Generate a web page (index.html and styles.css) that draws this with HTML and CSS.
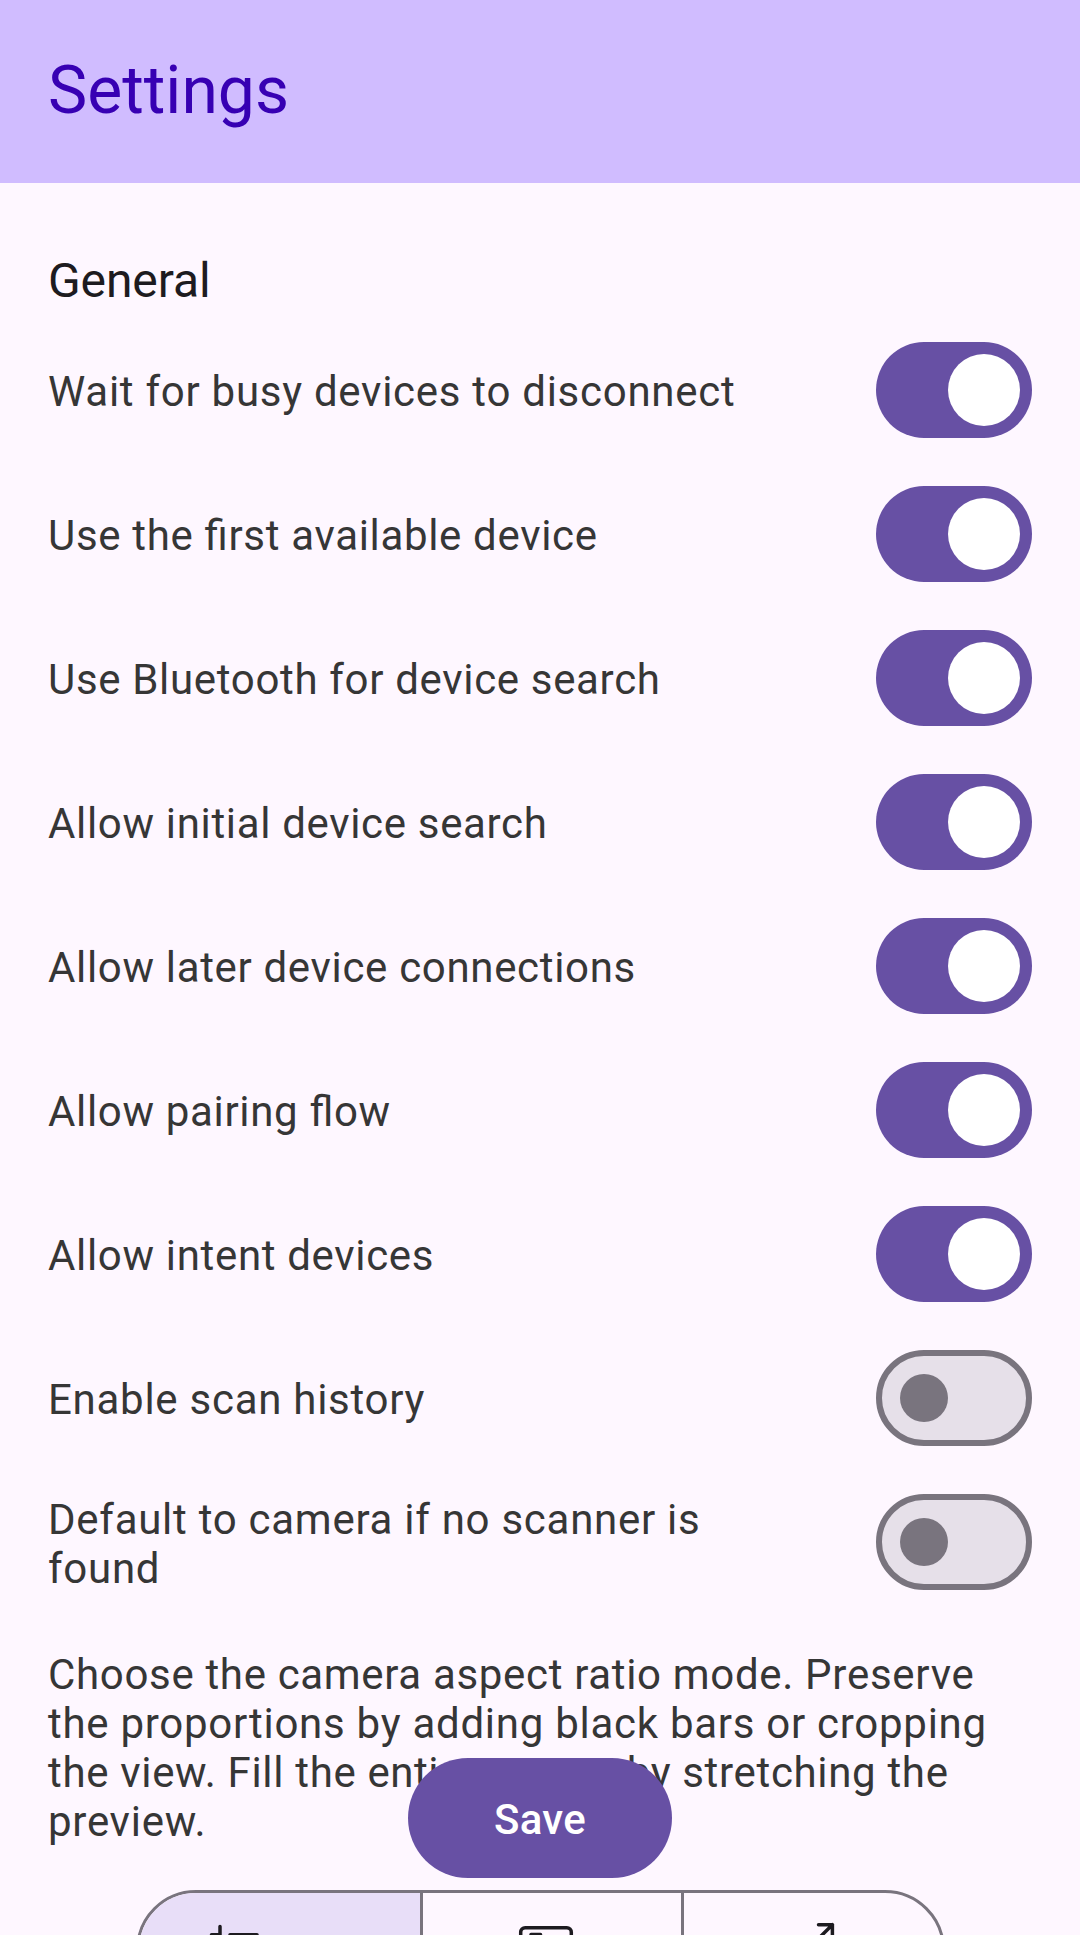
FILE: index.html
```html
<!DOCTYPE html>
<html lang="en">
<head>
<meta charset="utf-8">
<title>Settings</title>
<link rel="stylesheet" href="styles.css">
</head>
<body>
<div class="screen">
  <header class="app-bar"><h1 class="app-title">Settings</h1></header>
  <main class="content">
    <h2 class="section-title">General</h2>
    <ul class="settings">
      <li class="row"><span class="label">Wait for busy devices to disconnect</span><span class="switch on"><span class="thumb"></span></span></li>
      <li class="row"><span class="label tight">Use the first available device</span><span class="switch on"><span class="thumb"></span></span></li>
      <li class="row"><span class="label tight">Use Bluetooth for device search</span><span class="switch on"><span class="thumb"></span></span></li>
      <li class="row"><span class="label tight">Allow initial device search</span><span class="switch on"><span class="thumb"></span></span></li>
      <li class="row"><span class="label tight">Allow later device connections</span><span class="switch on"><span class="thumb"></span></span></li>
      <li class="row"><span class="label tight">Allow pairing flow</span><span class="switch on"><span class="thumb"></span></span></li>
      <li class="row"><span class="label tight">Allow intent devices</span><span class="switch on"><span class="thumb"></span></span></li>
      <li class="row"><span class="label">Enable scan history</span><span class="switch"><span class="thumb"></span></span></li>
      <li class="row"><span class="label">Default to camera if no scanner is found</span><span class="switch"><span class="thumb"></span></span></li>
    </ul>
    <p class="description"><span class="tight">Choose the camera aspect ratio mode.</span> Preserve the proportions by adding black bars or cropping <span class="tight">the view. Fill the </span><span class="tighter">entire screen by</span> <span class="tight">stretching the</span> preview.</p>
    <div class="segments">
      <div class="segment selected">
        <svg class="icon" viewBox="0 0 72 72"><path d="M11.500 20.800H20V12.500M30 20.800H57V48M20 29V56H48M57 56V65M57 56H65"/></svg>
      </div>
      <div class="segment">
        <svg class="icon" viewBox="0 0 72 72"><rect x="10.700" y="13.700" width="50.600" height="44" rx="4.500"/><path d="M21 31V20.500H30.500M51.500 41V51.500H41"/></svg>
      </div>
      <div class="segment">
        <svg class="icon" viewBox="0 0 72 72"><path d="M41.500 10.700H55.400V24M55.400 10.700L12 54M25 54H12V41"/></svg>
      </div>
    </div>
  </main>
  <button class="save">Save</button>
</div>
</body>
</html>
```
FILE: styles.css
```css
* { box-sizing: border-box; }
body { margin: 0; font-family: Roboto, sans-serif; background: #fef7ff; }
.screen { position: relative; height: 1935px; overflow: hidden; background: #fef7ff; }
.app-bar { height: 183px; padding: 0 48px 1px; display: flex; align-items: center; background: #d0bcff; }
.app-title { margin: 0; font-size: 66px; line-height: 84px; font-weight: 400; color: #3700b3; }
.content { padding: 70px 48px 0; }
.section-title { margin: 0; font-size: 48px; line-height: 56px; font-weight: 400; letter-spacing: -0.1px; color: #1d1b20; }
.settings { list-style: none; margin: 9px 0 0; padding: 0; }
.row { height: 144px; display: flex; align-items: center; justify-content: space-between; }
.label, .description { font-size: 42px; line-height: 49px; letter-spacing: 0.73px; color: #363636; font-feature-settings: "liga" 1; }
.label { width: 720px; padding-top: 3px; }
.tight { letter-spacing: 0.67px; }
.tighter { letter-spacing: 0.55px; }
.switch { width: 156px; height: 96px; flex: none; display: flex; align-items: center; padding: 0 18px; border: 6px solid #79747e; border-radius: 48px; background: #e6e0e9; }
.thumb { width: 48px; height: 48px; border-radius: 50%; background: #79747e; }
.switch.on { justify-content: flex-end; padding: 0 12px; border: 0; background: #6750a4; }
.switch.on .thumb { width: 72px; height: 72px; background: #fff; }
.description { margin: 36px 0 0; }
.segments { width: 809px; height: 120px; margin: 44px 0 0 88px; display: flex; overflow: hidden; border: 3px solid #79747e; border-radius: 60px; }
.segment { flex: none; width: 261px; padding: 21px 0 0 87px; border-left: 3px solid #79747e; }
.segment.selected { width: 281px; padding-left: 61px; border-left: 0; background: #e8def8; }
.segment:last-child { padding-left: 93px; }
.icon { display: block; width: 72px; height: 72px; fill: none; stroke: #1d1b20; stroke-width: 3.5; stroke-linejoin: round; stroke-linecap: round; }
.save { position: absolute; left: 408px; top: 1758px; width: 264px; height: 120px; padding: 2px 0 0; border: 0; border-radius: 60px; background: #6750a4; color: #fff; font: 500 42px/49px Roboto, sans-serif; letter-spacing: 0.3px; }
```
